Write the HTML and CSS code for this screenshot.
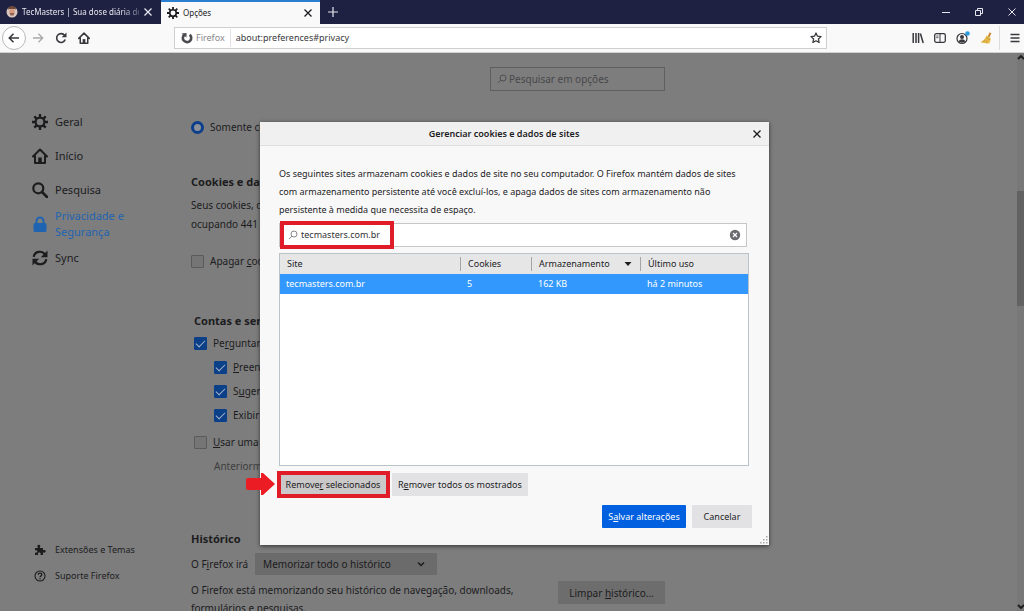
FILE: index.html
```html
<!DOCTYPE html>
<html lang="pt-BR">
<head>
<meta charset="utf-8">
<title>Opções</title>
<link rel="stylesheet" href="styles.css">
</head>
<body>
<svg class="defs" aria-hidden="true">
  <symbol id="gear" viewBox="0 0 16 16"><circle cx="8" cy="8" r="4.4" fill="none" stroke="currentColor" stroke-width="2.2"/><path d="M8 0v3.500M8 12.500v3.500M0 8h3.500M12.500 8H16M2.300 2.300l2.500 2.500M11.200 11.200l2.500 2.500M2.300 13.700l2.500-2.500M11.200 4.800l2.500-2.500" stroke="currentColor" stroke-width="2.4"/></symbol>
  <symbol id="home" viewBox="0 0 16 16"><path d="M1 8.500 8 1.500l7 7M3 8v7h10V8" fill="none" stroke="currentColor" stroke-width="2" stroke-linecap="round" stroke-linejoin="round"/><path d="M6.200 15V9.500h3.600V15z" fill="currentColor"/></symbol>
  <symbol id="close" viewBox="0 0 10 10"><path d="M1.500 1.500l7 7M8.500 1.500l-7 7" fill="none" stroke="currentColor" stroke-width="1.300"/></symbol>
  <symbol id="lens" viewBox="0 0 10 10"><circle cx="6" cy="4" r="3" fill="none" stroke="currentColor"/><path d="M3.800 6.200 1 9" stroke="currentColor"/></symbol>
</svg>

<header class="tabs">
  <div class="tab">
    <svg class="i12" viewBox="0 0 12 12"><circle cx="6" cy="6" r="5.500" fill="#d8c8c2"/><path d="M2 4a4 4 0 0 1 8 0L9 3H3z" fill="#6d4638"/><circle cx="6" cy="5.500" r="2.800" fill="#d59a80"/><path d="M3.500 7h5L7.500 9.500h-3z" fill="#95604d"/></svg>
    <span class="tab-title faded">TecMasters | Sua dose diária de</span>
    <button class="plain" aria-label="Fechar aba"><svg class="i10"><use href="#close"/></svg></button>
  </div>
  <div class="tab active">
    <svg class="i12"><use href="#gear"/></svg>
    <span class="tab-title">Opções</span>
    <button class="plain" aria-label="Fechar aba"><svg class="i10"><use href="#close"/></svg></button>
  </div>
  <button class="plain new-tab" aria-label="Nova aba"><svg class="i10" viewBox="0 0 10 10"><path d="M5 0v10M0 5h10" stroke="currentColor" stroke-width="1.200"/></svg></button>
  <div class="window-buttons">
    <button class="plain" aria-label="Minimizar"><svg class="i10" viewBox="0 0 10 10"><path d="M1 5.500h8" stroke="currentColor"/></svg></button>
    <button class="plain" aria-label="Restaurar"><svg class="i10" viewBox="0 0 10 10"><path d="M1.500 3.500h5v5h-5zM3.500 3V1.500h5v5H7" fill="none" stroke="currentColor"/></svg></button>
    <button class="plain" aria-label="Fechar"><svg class="i10" viewBox="0 0 10 10"><path d="M1.500 1.500l7 7M8.500 1.500l-7 7" stroke="currentColor"/></svg></button>
  </div>
</header>

<nav class="toolbar" aria-label="Navegação">
  <div class="nav-buttons">
    <button class="plain back" aria-label="Voltar"><svg class="i12" viewBox="0 0 12 12"><path d="M11 6H1.500M5.500 1.800 1.300 6l4.200 4.200" fill="none" stroke="currentColor" stroke-width="1.600"/></svg></button>
    <button class="plain forward" aria-label="Avançar"><svg class="i12" viewBox="0 0 12 12"><path d="M1 6h9.500M6.500 1.800 10.700 6l-4.200 4.200" fill="none" stroke="currentColor" stroke-width="1.300"/></svg></button>
    <button class="plain" aria-label="Recarregar"><svg class="i12" viewBox="0 0 12 12"><path d="M9.600 3.400A4.400 4.400 0 1 0 10.200 7.500" fill="none" stroke="currentColor" stroke-width="1.600"/><path d="M11.500.5v4.800H6.700z" fill="currentColor"/></svg></button>
    <button class="plain" aria-label="Página inicial"><svg class="i12"><use href="#home"/></svg></button>
  </div>
  <div class="urlbar">
    <svg class="i12" viewBox="0 0 12 12"><path d="M3.500 2.600a4.200 4.200 0 1 0 5.200.1" fill="none" stroke="#4a4a4f" stroke-width="2.600"/><path d="M.5 1.500 5.500 1v4.500z" fill="#4a4a4f"/></svg>
    <span class="identity">Firefox</span>
    <input class="url" aria-label="Endereço" value="about:preferences#privacy">
    <button class="plain" aria-label="Favoritar"><svg class="i12" viewBox="0 0 12 12"><path d="M6 1l1.500 3.200 3.500.4-2.600 2.300.7 3.600L6 8.800l-3.100 1.700.7-3.600L1 4.600l3.500-.4z" fill="none" stroke="currentColor" stroke-width="1.300" stroke-linejoin="round"/></svg></button>
  </div>
  <div class="tools">
    <button class="plain" aria-label="Biblioteca"><svg class="i12" viewBox="0 0 12 12"><path d="M1.200 1v10M4 1v10M6.600 1v10M8.400 1.500l2.800 9.500" stroke="currentColor" stroke-width="1.500"/></svg></button>
    <button class="plain" aria-label="Painel lateral"><svg class="i12" viewBox="0 0 12 12"><rect x=".7" y="1.700" width="10.600" height="8.600" rx="1.500" fill="none" stroke="currentColor" stroke-width="1.300"/><path d="M6 2v8" stroke="currentColor"/><path d="M2.200 4h2.300M2.200 5.700h2.300" stroke="currentColor" stroke-width=".8"/></svg></button>
    <button class="plain" aria-label="Conta"><svg class="i14" viewBox="0 0 14 14"><circle cx="6" cy="7.500" r="5" fill="none" stroke="currentColor" stroke-width="1.200"/><circle cx="6" cy="6" r="2" fill="currentColor"/><path d="M2.800 10.500c.5-3 6-3 6.400 0C7.500 12 4.500 12 2.800 10.500z" fill="currentColor"/><circle cx="11.500" cy="2.500" r="2.300" fill="#2a9de0"/></svg></button>
    <button class="plain" aria-label="Limpeza"><svg class="i12" viewBox="0 0 12 12"><path d="M10.500 .8 8.500 5" stroke="#c98c35" stroke-width="2"/><path d="M6.500 3.500l4 2.500c.5 2.500-.5 4.500-2 5.700L.3 10.300C3 9 5.500 6.500 6.500 3.500z" fill="#e8bd4e"/><path d="M6 5.500l4 2.200M3 10.300l2.500-2.500M5.800 10.800l1.500-2.200" stroke="#b98a2e" stroke-width=".8"/></svg></button>
    <button class="plain menu" aria-label="Menu"><svg class="i10" viewBox="0 0 10 10"><path d="M.5 1.500h9M.5 5h9M.5 8.500h9" stroke="currentColor" stroke-width="1.400"/></svg></button>
  </div>
</nav>

<div class="content">
  <aside class="sidebar">
    <ul class="categories">
      <li><a href="#geral"><svg class="i16"><use href="#gear"/></svg>Geral</a></li>
      <li><a href="#inicio"><svg class="i16"><use href="#home"/></svg>Início</a></li>
      <li><a href="#pesquisa"><svg class="i16" viewBox="0 0 16 16"><circle cx="6.300" cy="6.300" r="5" fill="none" stroke="currentColor" stroke-width="2.200"/><path d="M10 10l5 5" stroke="currentColor" stroke-width="2.600" stroke-linecap="round"/></svg>Pesquisa</a></li>
      <li><a href="#privacy" class="selected"><svg class="i16" viewBox="0 0 16 16"><rect x="1.500" y="7" width="13" height="9" rx="1.500" fill="currentColor"/><path d="M4.500 8V5a3.500 3.500 0 0 1 7 0v3" fill="none" stroke="currentColor" stroke-width="2"/></svg>Privacidade e Segurança</a></li>
      <li><a href="#sync"><svg class="i16" viewBox="0 0 16 16"><path d="M1.800 6.800C2.500 1 10 .2 13 4.500M14.200 9.200C13.500 15 6 15.800 3 11.500" fill="none" stroke="currentColor" stroke-width="2.200"/><path d="M15.500.5v6.700H8.800zM.5 15.500V8.800h6.700z" fill="currentColor"/></svg>Sync</a></li>
    </ul>
    <ul class="links">
      <li><a href="#extensoes"><svg class="i12" viewBox="0 0 12 12"><path d="M1 4h3C2.800 2 3.500.8 4.800.8S6.800 2 5.800 4H9v2.500c1.500-1 2.700-.3 2.700.8S10.500 9.200 9 8.300V11H6.500C7 9 6.300 8.500 5.300 8.500S3.500 9 4.200 11H1V8.500c1.700.5 2.300-.2 2.300-1S2.500 6 1 6.500z" fill="currentColor"/></svg>Extensões e Temas</a></li>
      <li><a href="#suporte"><svg class="i12" viewBox="0 0 12 12"><circle cx="6" cy="6" r="5" fill="none" stroke="currentColor" stroke-width="1.100"/><path d="M4.200 4.800C4.200 2.500 7.800 2.500 7.800 4.700 7.800 6 6 6 6 7.300M6 8.200v1.300" fill="none" stroke="currentColor" stroke-width="1.300"/></svg>Suporte Firefox</a></li>
    </ul>
  </aside>

  <main class="pane">
    <label class="search"><svg class="i10"><use href="#lens"/></svg><input aria-label="Pesquisar em opções" placeholder="Pesquisar em opções"></label>

    <label class="row only"><input type="radio" checked>Somente co</label>

    <h2 class="cookies-title">Cookies e dad</h2>
    <p class="usage">Seus cookies, d<br>ocupando 441</p>
    <label class="row erase"><input type="checkbox"><span>Apagar <u>c</u>oo</span></label>

    <section class="logins">
      <h2>Contas e sen</h2>
      <label class="row"><input type="checkbox" checked><span>Pe<u>r</u>guntar</span></label>
      <label class="row sub"><input type="checkbox" checked><span><u>P</u>reench</span></label>
      <label class="row sub"><input type="checkbox" checked><span>S<u>u</u>gerir</span></label>
      <label class="row sub"><input type="checkbox" checked><span>Exibir</span></label>
      <label class="row master"><input type="checkbox"><span><u>U</u>sar uma</span></label>
      <p class="formerly">Anteriorme</p>
    </section>

    <section class="history">
      <h2>Histórico</h2>
      <div class="mode">
        <label for="mode">O F<u>i</u>refox irá</label>
        <span class="select"><select id="mode"><option>Memorizar todo o histórico</option></select><svg class="i10" viewBox="0 0 10 10"><path d="M2 3.500l3 3 3-3" fill="none" stroke="currentColor" stroke-width="1.500"/></svg></span>
      </div>
      <div class="summary">
        <p>O Firefox está memorizando seu histórico de navegação, downloads, formulários e pesquisas.</p>
        <button class="clear">Limpar <u>h</u>istórico...</button>
      </div>
    </section>
  </main>

  <div class="scrollbar"><svg class="arrow up" viewBox="0 0 8 8"><path d="M1 6l3-3 3 3" fill="none" stroke="currentColor" stroke-width="1.800"/></svg><span class="thumb"></span><svg class="arrow" viewBox="0 0 8 8"><path d="M1 2l3 3 3-3" fill="none" stroke="currentColor" stroke-width="1.800"/></svg></div>

  <div class="overlay">
    <div class="dialog" role="dialog" aria-labelledby="dlg">
      <div class="titlebar">
        <h1 id="dlg">Gerenciar cookies e dados de sites</h1>
        <button class="plain" aria-label="Fechar"><svg class="i10"><use href="#close"/></svg></button>
      </div>
      <div class="dialog-body">
        <p class="intro">Os seguintes sites armazenam cookies e dados de site no seu computador. O Firefox mantém dados de sites com armazenamento persistente até você excluí-los, e apaga dados de sites com armazenamento não persistente à medida que necessita de espaço.</p>
        <div class="filter">
          <svg class="i10"><use href="#lens"/></svg>
          <input aria-label="Pesquisar sites" value="tecmasters.com.br">
          <button class="plain" aria-label="Limpar"><svg class="i12" viewBox="0 0 12 12"><circle cx="6" cy="6" r="5.200" fill="#6b6b6f"/><path d="M4 4l4 4M8 4L4 8" stroke="#fff" stroke-width="1.200"/></svg></button>
          <span class="mark mark-filter"></span>
        </div>
        <div class="sites">
          <table>
            <colgroup><col class="c-site"><col class="c-cookies"><col class="c-storage"><col></colgroup>
            <thead><tr><th>Site</th><th>Cookies</th><th><span class="sorted">Armazenamento<svg class="sort" viewBox="0 0 8 8"><path d="M.5 2h7L4 6z" fill="currentColor"/></svg></span></th><th>Último uso</th></tr></thead>
            <tbody><tr><td>tecmasters.com.br</td><td>5</td><td>162 KB</td><td>há 2 minutos</td></tr></tbody>
          </table>
        </div>
        <div class="actions">
          <div class="marked">
            <button class="btn hover">Remove<u>r</u> selecionados</button>
            <span class="mark mark-button"></span>
            <svg class="pointer" viewBox="0 0 29 22"><path d="M2 5h13V0h2l12 11-12 11h-2v-5H2q-2 0-2-2V7q0-2 2-2z" fill="#ec1c24"/></svg>
          </div>
          <button class="btn">R<u>e</u>mover todos os mostrados</button>
        </div>
        <div class="confirm">
          <button class="btn primary">S<u>a</u>lvar alterações</button>
          <button class="btn">Cancelar</button>
        </div>
      </div>
      <svg class="grip" viewBox="0 0 8 8"><path d="M6 0h1.500v1.500H6zM3 3h1.500v1.500H3zM6 3h1.500v1.500H6zM0 6h1.500v1.500H0zM3 6h1.500v1.500H3zM6 6h1.500v1.500H6z" fill="#aaa"/></svg>
    </div>
  </div>
</div>
</body>
</html>
```

FILE: styles.css
```css
* { box-sizing: border-box; }
body { margin: 0; height: 100vh; display: flex; flex-direction: column; overflow: hidden; font: 9px/18px "Noto Sans", "Open Sans", sans-serif; color: #1c1c1e; background: #7d7d7d; }
button, input, select { font: inherit; color: inherit; }
h1, h2, p, ul { margin: 0; padding: 0; }
ul { list-style: none; }
a { color: inherit; text-decoration: none; }
svg { flex: none; display: block; }
u { text-underline-offset: 1px; }
.defs { position: absolute; width: 0; height: 0; }
.i10 { width: 10px; height: 10px; }
.i12 { width: 12px; height: 12px; }
.i14 { width: 14px; height: 14px; }
.i16 { width: 16px; height: 16px; }
.plain { display: flex; align-items: center; justify-content: center; padding: 0; border: 0; background: none; }

.tabs { flex: none; display: flex; height: 24px; background: #1f2142; color: #e6e6ee; font-size: 8px; }
.tab { display: flex; align-items: center; gap: 4px; width: 161px; padding: 0 8px 0 6px; }
.tab.active { width: 159px; padding-right: 7px; border-top: 2px solid #2a7fd0; background: #f9f9fa; color: #1c1c1e; }
.tab-title { flex: 1; overflow: hidden; white-space: nowrap; }
.faded { mask-image: linear-gradient(to right, #000 85%, rgba(0, 0, 0, .3)); }
.new-tab { width: 25px; }
.window-buttons { display: flex; gap: 23px; margin-left: auto; padding-right: 7px; }

.toolbar { flex: none; display: flex; align-items: center; height: 29px; padding: 0 4px 0 2px; border-bottom: 1px solid #d2d2d4; background: #f9f9fa; color: #39393d; }
.nav-buttons { display: flex; align-items: center; gap: 11px; flex: 0 0 172px; }
.back { width: 24px; height: 24px; border: 1px solid #b8b8bc; border-radius: 50%; background: #fff; }
.forward { color: #a8a8ac; margin-left: -5px; }
.urlbar { flex: 1; display: flex; align-items: center; gap: 3px; height: 22px; padding: 0 4px 0 6px; border: 1px solid #cfcfd2; background: #fff; }
.identity { padding-right: 5px; border-right: 1px solid #e2e2e4; color: #87878b; }
.url { flex: 1; min-width: 0; padding: 0 2px; border: 0; background: none; }
.tools { display: flex; align-items: center; justify-content: flex-end; gap: 10px; flex: 0 0 193px; }
.menu { height: 24px; margin-left: -3px; padding-left: 10px; border-left: 1px solid #dcdcde; }

.content { position: relative; flex: 1; min-height: 0; display: flex; overflow: hidden; }
.sidebar { flex: none; display: flex; flex-direction: column; justify-content: space-between; width: 191px; padding: 52px 50px 22px 32px; line-height: 16px; }
.categories a { display: flex; align-items: center; gap: 7px; min-height: 34px; font-size: 11px; }
.categories .selected { color: #1f64b0; }
.links a { display: flex; align-items: center; gap: 9px; height: 26px; padding-left: 2px; white-space: nowrap; }

.pane { flex: 0 1 474px; padding-top: 14px; font-size: 10px; }
.search { display: flex; align-items: center; gap: 2px; width: 175px; height: 24px; margin-left: auto; padding: 0 6px; border: 1px solid #5f5f61; color: #4e4e50; }
.search input { flex: 1; min-width: 0; padding: 0; border: 0; background: none; }
.search input::placeholder { color: #48484a; opacity: 1; }
h2 { font-size: 11px; line-height: 18px; font-weight: 700; }
.row { display: flex; align-items: center; gap: 6px; height: 18px; white-space: nowrap; }
.row input { appearance: none; flex: none; width: 13px; height: 13px; margin: 0; border: 1px solid #5b5b5c; border-radius: 1px; background: #757575; }
.row input[type=radio] { border: 3px solid #0c3f8b; border-radius: 50%; background: #8d9096; }
.row input[type=checkbox]:checked { display: grid; place-items: center; border-color: #0b3f87; background: #0b3f87; }
.row input[type=checkbox]:checked::after { content: ""; width: 8px; height: 4px; border: solid #a5b4c8; border-width: 0 0 1px 1px; transform: translateY(-1px) rotate(-45deg); }
.only { margin-top: 27px; }
.cookies-title { margin-top: 37px; }
.usage { margin-top: 5px; line-height: 19px; }
.erase { margin-top: 18px; }
.logins { margin-top: 42px; padding-left: 3px; }
.logins .row { margin-top: 6px; }
.logins h2 + .row { margin-top: 4px; }
.sub { padding-left: 20px; }
.logins .master { margin-top: 9px; }
.formerly { margin: 6px 0 0 20px; color: #3d3d3e; }
.history { margin-top: 55px; }
.mode { display: flex; align-items: center; gap: 7px; margin-top: 5px; }
.select { display: flex; align-items: center; width: 182px; height: 22px; padding: 0 11px 0 8px; background: #6b6b6b; }
.select select { flex: 1; min-width: 0; appearance: none; padding: 0; border: 0; background: none; }
.summary { display: flex; align-items: flex-start; justify-content: space-between; gap: 12px; margin-top: 6px; }
.summary p { flex: 0 1 350px; }
.clear { flex: none; width: 107px; height: 23px; padding: 0; border: 0; background: #6d6d6d; white-space: nowrap; }

.scrollbar { display: flex; flex-direction: column; justify-content: space-between; width: 7px; margin-left: auto; background: #787878; }
.scrollbar .thumb { height: 115px; margin: 130px 0 auto; background: #626262; }
.arrow { width: 8px; height: 8px; }

.overlay { position: absolute; inset: 0; display: flex; align-items: center; justify-content: center; padding: 3px 0 0 5px; }
.dialog { position: relative; width: 509px; background: #f9f8f9; box-shadow: 0 1px 4px rgba(0, 0, 0, .6); }
.titlebar { display: flex; align-items: center; height: 24px; padding: 0 7px 0 0; border-bottom: 1px solid #dedee0; background: #f0f0f0; }
h1 { flex: 1; padding-right: 4px; font-size: 9px; font-weight: 600; text-align: center; }
.dialog-body { padding: 19px 17px 17px 19px; }
.intro { padding-right: 12px; }
.filter { position: relative; display: flex; align-items: center; gap: 3px; height: 24px; margin: 4px 5px 0 0; padding: 0 5px 0 8px; border: 1px solid #c6c6c8; background: #fff; color: #333; }
.filter > .i10 { color: #87878b; }
.filter input { flex: 1; min-width: 0; padding: 0; border: 0; background: none; }
.mark { position: absolute; border: 4px solid #df1c28; pointer-events: none; }
.mark-filter { left: 0; top: -3px; width: 114px; height: 28px; }
.sites { height: 213px; margin: 6px 3px 0 0; border: 1px solid #b9c3c8; background: #fff; }
table { width: 100%; border-collapse: collapse; table-layout: fixed; text-align: left; }
.c-site { width: 181px; }
.c-cookies { width: 71px; }
.c-storage { width: 109px; }
th { height: 20px; padding: 0 7px; font-weight: 400; line-height: 14px; background: linear-gradient(#a5a5a8, #a5a5a8) right center / 1px 14px no-repeat #e6e6e7; }
th:last-child { background: #e6e6e7; }
.sorted { display: flex; align-items: center; justify-content: space-between; }
.sort { width: 8px; height: 8px; margin-right: 2px; }
td { height: 20px; padding: 0 6px; line-height: 18px; background: #3398fd; color: #fff; }
.actions { display: flex; gap: 5px; margin-top: 7px; }
.btn { height: 23px; padding: 0 6px; border: 0; border-radius: 1px; background: #e2e2e4; white-space: nowrap; }
.hover { width: 108px; background: #cac8c9; }
.marked { position: relative; }
.mark-button { left: -2px; top: -2px; width: 113px; height: 27px; }
.pointer { position: absolute; left: -33px; top: 0; width: 29px; height: 22px; }
.confirm { display: flex; justify-content: flex-end; gap: 6px; margin-top: 9px; }
.confirm .btn { min-width: 60px; }
.confirm .primary { min-width: 84px; background: #0060df; color: #fff; }
.grip { position: absolute; right: 1px; bottom: 1px; width: 8px; height: 8px; }
```
